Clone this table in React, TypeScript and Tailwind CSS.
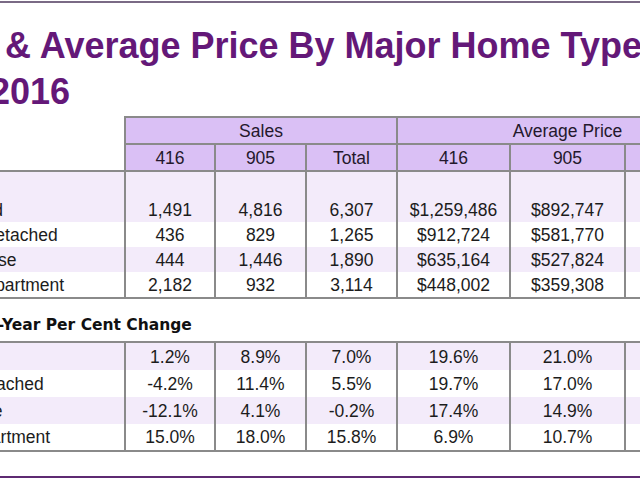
import React from 'react';

// 表の行データ
type Row = {
  label: string;
  pad: string;
  values: string[];
};

const sales: Row[] = [
  { label: 'Detached', pad: 'pl-[28px]', values: ['1,491', '4,816', '6,307', '$1,259,486', '$892,747', ''] },
  { label: 'Semi-Detached', pad: 'pl-[37px]', values: ['436', '829', '1,265', '$912,724', '$581,770', ''] },
  { label: 'Townhouse', pad: 'pl-[28px]', values: ['444', '1,446', '1,890', '$635,164', '$527,824', ''] },
  { label: 'Condo Apartment', pad: 'pl-[28px]', values: ['2,182', '932', '3,114', '$448,002', '$359,308', ''] },
];

const change: Row[] = [
  { label: 'Detached', pad: 'pl-[14px]', values: ['1.2%', '8.9%', '7.0%', '19.6%', '21.0%', ''] },
  { label: 'Semi-Detached', pad: 'pl-[23px]', values: ['-4.2%', '11.4%', '5.5%', '19.7%', '17.0%', ''] },
  { label: 'Townhouse', pad: 'pl-[14px]', values: ['-12.1%', '4.1%', '-0.2%', '17.4%', '14.9%', ''] },
  { label: 'Condo Apartment', pad: 'pl-[14px]', values: ['15.0%', '18.0%', '15.8%', '6.9%', '10.7%', ''] },
];

const salesHeights = ['h-[50px] items-end pb-[2px]', 'h-[25px] items-center', 'h-[25px] items-center', 'h-[25px] items-center'];
const changeHeights = ['h-[27px] items-center', 'h-[27px] items-center', 'h-[27px] items-center', 'h-[26px] items-center'];

function DataTable({ rows, heights }: { rows: Row[]; heights: string[] }) {
  return (
    <div className="border-y-2 border-[#8a8a8a]">
      {rows.map((row, i) => (
        <div
          key={row.label}
          className={`grid grid-cols-[224px_90px_91px_91px_113px_115px_113px] ${i % 2 === 0 ? 'bg-[#f3ebfa]' : 'bg-white'}`}
        >
          <div className={`flex whitespace-nowrap ${heights[i]} ${row.pad}`}>{row.label}</div>
          {row.values.map((v, j) => (
            <div key={j} className={`flex justify-center border-l-2 border-[#8a8a8a] ${heights[i]}`}>
              {v}
            </div>
          ))}
        </div>
      ))}
    </div>
  );
}

export default function App() {
  return (
    <div className="w-[640px] h-[480px] overflow-hidden bg-white flex flex-col font-['Liberation_Sans',Arial,sans-serif]">
      <div className="mt-[1px] h-[2px] bg-[#7a6a85] shrink-0" />

      {/* タイトル（左側は切れている） */}
      <h1 className="mt-[20px] text-[36px] leading-[46px] font-bold text-[#641878] whitespace-nowrap shrink-0">
        <div className="-ml-[99px]">Sales &amp; Average Price By Major Home Type</div>
        <div className="-ml-[10px]">2016</div>
      </h1>

      <div className="-ml-[100px] w-[837px] mt-[1px] shrink-0 text-[17.5px] leading-[20px] text-[#1c1c1c]">
        {/* ヘッダー */}
        <div className="flex">
          <div className="w-[224px] shrink-0" />
          <div className="w-[613px] shrink-0 border-t-2 border-[#8a8a8a] bg-[#dac0f5] text-[#24182c]">
            <div className="grid grid-cols-[272px_341px] h-[27px] border-b-2 border-[#8a8a8a]">
              <div className="flex items-center justify-center border-l-2 border-[#8a8a8a]">Sales</div>
              <div className="flex items-center justify-center border-l-2 border-[#8a8a8a]">Average Price</div>
            </div>
            <div className="grid grid-cols-[90px_91px_91px_113px_115px_113px] h-[25px]">
              {['416', '905', 'Total', '416', '905', 'Total'].map((h, i) => (
                <div key={i} className="flex items-center justify-center border-l-2 border-[#8a8a8a]">
                  {h}
                </div>
              ))}
            </div>
          </div>
        </div>

        <DataTable rows={sales} heights={salesHeights} />

        <div className="mt-[16px] ml-[14px] h-[20px] leading-[20px] text-[15.5px] font-bold font-['DejaVu_Sans',sans-serif] text-[#111] whitespace-nowrap">
          Year-over-Year Per Cent Change
        </div>

        <div className="mt-[6px]">
          <DataTable rows={change} heights={changeHeights} />
        </div>
      </div>

      <div className="mt-auto mb-[2px] h-[2px] bg-[#5e2a72] shrink-0" />
    </div>
  );
}
